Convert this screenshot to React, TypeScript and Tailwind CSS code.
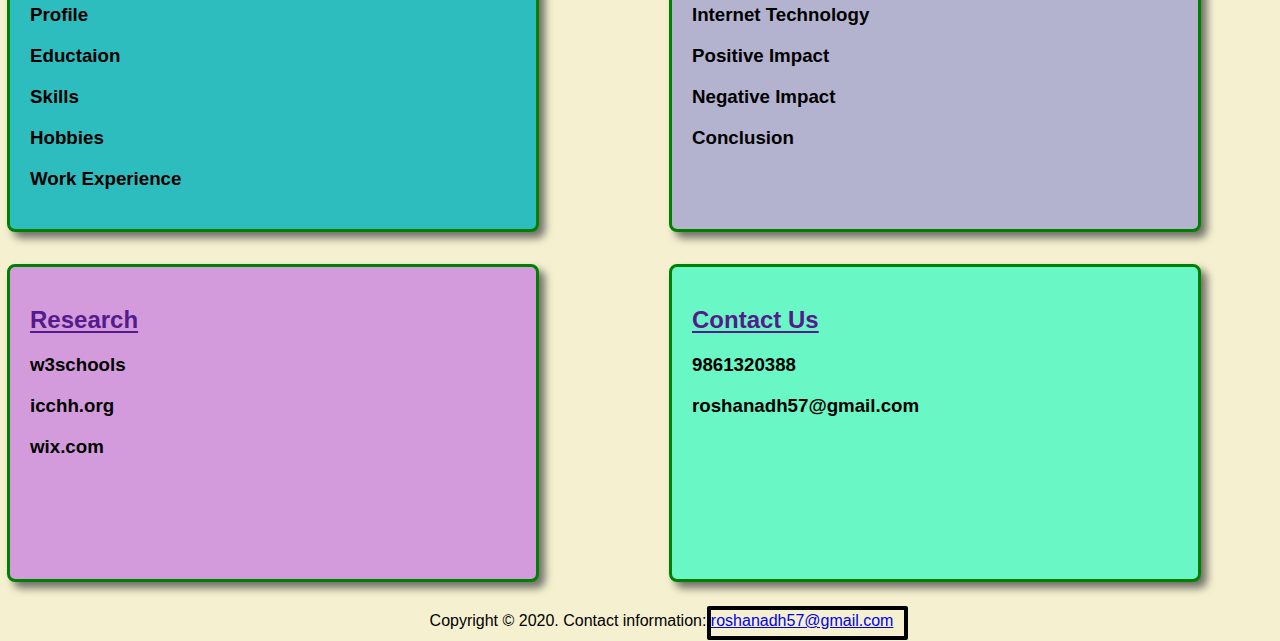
import React from 'react';

type Card = {
  title: string;
  items: string[];
  bg: string;
};

const cards: Card[] = [
  {
    title: 'About Me',
    items: ['Profile', 'Eductaion', 'Skills', 'Hobbies', 'Work Experience'],
    bg: 'bg-[#2ebdbe]',
  },
  {
    title: 'Topics',
    items: ['Internet Technology', 'Positive Impact', 'Negative Impact', 'Conclusion'],
    bg: 'bg-[#b3b3d0]',
  },
  {
    title: 'Research',
    items: ['w3schools', 'icchh.org', 'wix.com'],
    bg: 'bg-[#d39bdb]',
  },
  {
    title: 'Contact Us',
    items: ['9861320388', 'roshanadh57@gmail.com'],
    bg: 'bg-[#69f8c5]',
  },
];

function InfoCard({ title, items, bg }: Card) {
  return (
    <div
      className={`${bg} h-[318px] rounded-lg border-[3px] border-[#008000] px-5 pt-[39px] shadow-[6px_6px_8px_#6e6e66]`}
    >
      <h2 className="text-[24px] leading-[27.6px] font-bold text-[#551a8b] underline underline-offset-[3px] decoration-2">
        <span className="cursor-pointer">{title}</span>
      </h2>
      <ul className="mt-5 flex flex-col gap-[19px]">
        {items.map((item) => (
          <li key={item} className="text-[18.72px] leading-[22px] font-bold text-black">
            {item}
          </li>
        ))}
      </ul>
    </div>
  );
}

export default function App() {
  return (
    <div className="min-h-screen overflow-hidden bg-[#f5f1d0] font-['Liberation_Sans',Arial,sans-serif]">
      <div className="-mt-[86px] grid grid-cols-[532px_532px] gap-x-[130px] gap-y-8 pl-[7px]">
        {cards.map((card) => (
          <InfoCard key={card.title} {...card} />
        ))}
      </div>
      <p className="mt-6 pl-[58px] text-center text-[16px] leading-[18px] text-black">
        Copyright © 2020. Contact information:{' '}
        <a
          href="#"
          className="-ml-1 inline-block rounded-[2px] border-4 border-black pt-[2px] pb-[6px] pr-[11px] text-[#0000ee] underline"
        >
          roshanadh57@gmail.com
        </a>
      </p>
    </div>
  );
}
